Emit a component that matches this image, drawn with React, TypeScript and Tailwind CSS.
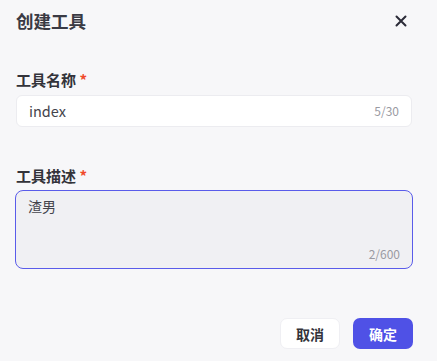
export default function App() {
  return (
    <div
      className="w-[437px] h-[361px] bg-[#f7f7f9] text-[#333338] overflow-hidden"
      style={{ fontFamily: '"Noto Sans CJK SC", "Noto Sans", sans-serif' }}
    >
      {/* Header */}
      <div className="h-[42px] flex items-center justify-between pl-4 pr-[30px]">
        <span className="text-[17.5px] font-semibold leading-[22px] text-[#3a3a44]">创建工具</span>
        <svg width="12" height="12" viewBox="0 0 12 12" className="text-[#2b2b38]">
          <path d="M1.5 1.5 L10.5 10.5 M10.5 1.5 L1.5 10.5" stroke="currentColor" strokeWidth="2" strokeLinecap="round" />
        </svg>
      </div>

      <div className="px-4">
        {/* Name */}
        <div className="mt-[28px] text-[15px] font-semibold leading-5 text-[#33333a]">
          工具名称 <span className="text-[#f04a2a]">*</span>
        </div>
        <div className="mt-[5px] w-[396px] h-[32px] bg-white border border-[#ececf0] rounded-[6px] flex items-center justify-between pl-3 pr-3">
          <span className="text-[14.5px] text-[#44444c]">index</span>
          <span className="text-xs text-[#9a9aa2]">5/30</span>
        </div>

        {/* Description */}
        <div className="mt-[39px] text-[15px] font-semibold leading-5 text-[#33333a]">
          工具描述 <span className="text-[#f04a2a]">*</span>
        </div>
        <div className="mt-[4px] -ml-px w-[398px] h-[79px] bg-[#f0f0f3] border border-[#5a5cea] rounded-[8px] flex flex-col justify-between pl-3 pr-3 pt-[5px] pb-[4px]">
          <span className="text-sm text-[#44444c] leading-5">渣男</span>
          <span className="self-end text-xs text-[#9a9aa2] leading-5">2/600</span>
        </div>

        {/* Footer */}
        <div className="mt-[49px] flex justify-end gap-[13px] w-[397px]">
          <button className="w-[60px] h-[31px] bg-white border border-[#efeff3] rounded-[7px] text-sm font-semibold text-[#33333a]">
            取消
          </button>
          <button className="w-[60px] h-[31px] bg-[#4f51e6] rounded-[7px] text-sm font-semibold text-white">
            确定
          </button>
        </div>
      </div>
    </div>
  )
}
